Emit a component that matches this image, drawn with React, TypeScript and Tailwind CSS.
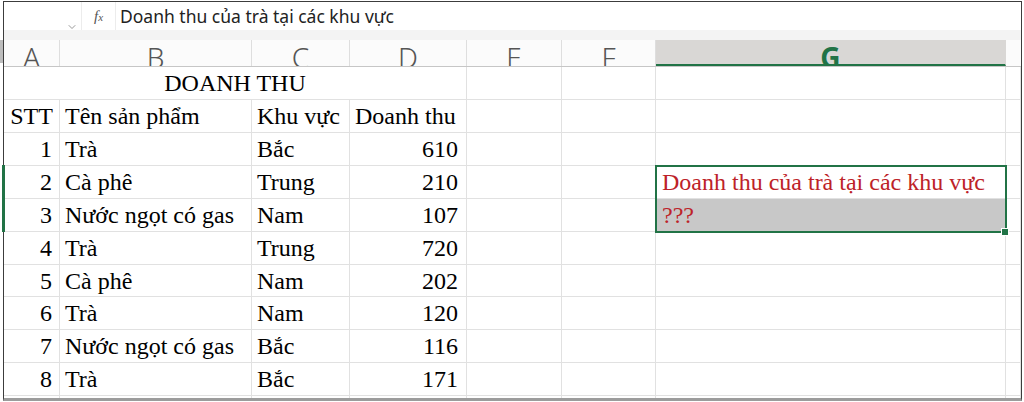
import { ChevronDown } from 'lucide-react';

const COLS = ['A', 'B', 'C', 'D', 'E', 'F', 'G'];
const COL_W = ['w-[56px]', 'w-[192px]', 'w-[98px]', 'w-[117px]', 'w-[95px]', 'w-[94px]', 'w-[350px]'];

const ROWS: [number, string, string, number][] = [
  [1, 'Trà', 'Bắc', 610],
  [2, 'Cà phê', 'Trung', 210],
  [3, 'Nước ngọt có gas', 'Nam', 107],
  [4, 'Trà', 'Trung', 720],
  [5, 'Cà phê', 'Nam', 202],
  [6, 'Trà', 'Nam', 120],
  [7, 'Nước ngọt có gas', 'Bắc', 116],
  [8, 'Trà', 'Bắc', 171],
];

const HEIGHTS = ['h-[33px]', 'h-[33px]', 'h-[33px]', 'h-[33px]', 'h-[32px]', 'h-[33px]', 'h-[33px]', 'h-[33px]', 'h-[27px]'];

const cell = 'border-r border-b border-[#e1e1e1] flex items-center shrink-0 overflow-hidden whitespace-nowrap';

function Row({ h, cells }: { h: string; cells: React.ReactNode[] }) {
  return (
    <div className={`flex ${h}`}>
      {cells.map((c, i) => (
        <div key={i} className={`${cell} ${COL_W[i]} h-full`}>{c}</div>
      ))}
      <div className={`${cell} flex-1 h-full`} />
    </div>
  );
}

export default function App() {
  return (
    <div className="w-[1024px] h-[402px] bg-white overflow-hidden pt-[1px] pl-[3px] relative" style={{ fontFamily: '"Liberation Serif", "Times New Roman", serif' }}>
      <div className="w-[1019px] h-[400px] border-l border-t border-r border-[#3c3c3c] border-b-[3px] border-b-[#9c9c9c] flex flex-col overflow-hidden">
        {/* formula bar */}
        <div className="h-[28px] flex shrink-0 bg-white" style={{ fontFamily: '"Noto Sans", "Open Sans", sans-serif' }}>
          <div className="w-[78px] relative border-r border-[#ececec]">
            <ChevronDown className="absolute right-[3px] bottom-[-3px] w-3 h-3 text-[#777]" strokeWidth={1.5} />
          </div>
          <div className="w-[34px] flex items-center justify-center border-r border-[#ececec]">
            <span className="italic text-[15px] text-[#555]" style={{ fontFamily: '"Liberation Serif", serif' }}>f<span className="text-[11px]">x</span></span>
          </div>
          <div className="flex-1 flex items-center pl-[4px] text-[17.5px] text-[#222]">
            Doanh thu của trà tại các khu vực
          </div>
        </div>
        <div className="h-[10px] bg-[#f3f3f3] shrink-0" />
        {/* column header */}
        <div className="h-[27px] flex shrink-0 border-b border-[#c6c6c6] bg-[#fbfbfb]" style={{ fontFamily: '"Noto Sans", "Open Sans", sans-serif' }}>
          {COLS.map((c, i) => (
            <div key={c} className={`${COL_W[i]} h-full shrink-0 overflow-hidden flex justify-center border-r ${c === 'G' ? 'bg-[#d9d7d5] border-[#d9d7d5] border-b-2 border-b-[#217346]' : 'border-[#dedede]'}`}>
              <span className={`leading-none pt-[3px] text-[28px] ${c === 'G' ? 'font-bold text-[#217346]' : 'font-light text-[#555]'}`}>{c}</span>
            </div>
          ))}
          <div className="flex-1" />
        </div>
        {/* title row */}
        <div className="flex h-[33px] shrink-0">
          <div className={`${cell} w-[463px] justify-center text-[24px] text-black h-full`}>DOANH THU</div>
          <div className={`${cell} ${COL_W[4]} h-full`} />
          <div className={`${cell} ${COL_W[5]} h-full`} />
          <div className={`${cell} ${COL_W[6]} h-full`} />
          <div className={`${cell} flex-1 h-full`} />
        </div>
        {/* table body */}
        <div className="shrink-0 text-[24px] text-black">
          <Row h="h-[33px]" cells={[
            <span className="w-full text-center">STT</span>,
            <span className="pl-[5px]">Tên sản phẩm</span>,
            <span className="pl-[5px]">Khu vực</span>,
            <span className="pl-[5px]">Doanh thu</span>,
            null, null, null,
          ]} />
          {ROWS.map((r, idx) => (
            <Row key={r[0]} h={HEIGHTS[idx]} cells={[
              <span className="w-full text-right pr-[7px]">{r[0]}</span>,
              <span className="pl-[5px]">{r[1]}</span>,
              <span className="pl-[5px]">{r[2]}</span>,
              <span className="w-full text-right pr-[8px]">{r[3]}</span>,
              null, null,
              idx === 1 ? <span className="pl-[6px] text-[#bd2228]">Doanh thu của trà tại các khu vực</span>
                : idx === 2 ? <span className="w-full h-full flex items-center pl-[6px] text-[#bd2228] bg-[#c8c8c8]">???</span>
                : null,
            ]} />
          ))}
          <Row h="h-[20px]" cells={[null, null, null, null, null, null, null]} />
        </div>
      </div>
      {/* selection overlay */}
      <div className="absolute left-[655px] top-[165px] w-[352px] h-[68px] border-2 border-[#217346] pointer-events-none" />
      <div className="absolute left-[1001px] top-[228px] w-[8px] h-[8px] bg-[#217346] border border-white" />
      <div className="absolute left-[2px] top-[165px] w-[3px] h-[67px] bg-[#217346]" />
      <div className="absolute left-0 top-[40px] w-[3px] h-[23px] bg-[#bdbdbd]" />
    </div>
  );
}
